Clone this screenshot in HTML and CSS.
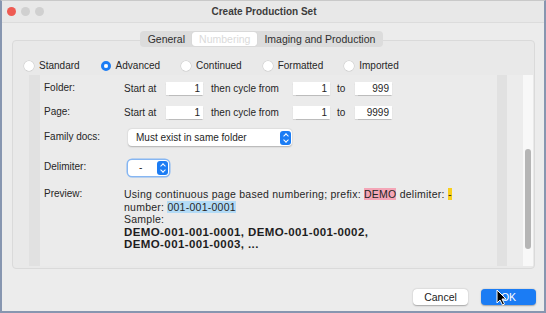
FILE: index.html
```html
<!DOCTYPE html>
<html lang="en">
<head>
    <meta charset="UTF-8">
    <meta name="viewport" content="width=device-width, initial-scale=1.0">
    <title>Create Production Set</title>
    <link rel="stylesheet" href="styles.css">
</head>
<body>
    <div class="window">
        <div class="titlebar">
            <div class="lights">
                <span class="light red"></span>
                <span class="light"></span>
                <span class="light"></span>
            </div>
            <div class="title">Create Production Set</div>
        </div>

        <div class="tabs-row">
            <div class="tabs">
                <span class="tab">General</span>
                <span class="tab selected">Numbering</span>
                <span class="tab">Imaging and Production</span>
            </div>
        </div>

        <div class="box">
            <div class="radios">
                <label class="radio"><span class="dot"></span>Standard</label>
                <label class="radio checked"><span class="dot"></span>Advanced</label>
                <label class="radio"><span class="dot"></span>Continued</label>
                <label class="radio"><span class="dot"></span>Formatted</label>
                <label class="radio"><span class="dot"></span>Imported</label>
            </div>

            <div class="scroll">
                <div class="strip"></div>
                <div class="form">
                    <div class="row">
                        <span class="label">Folder:</span>
                        <span class="word start">Start at</span>
                        <span class="field">1</span>
                        <span class="word cycle">then cycle from</span>
                        <span class="field">1</span>
                        <span class="word to">to</span>
                        <span class="field">999</span>
                    </div>
                    <div class="row">
                        <span class="label">Page:</span>
                        <span class="word start">Start at</span>
                        <span class="field">1</span>
                        <span class="word cycle">then cycle from</span>
                        <span class="field">1</span>
                        <span class="word to">to</span>
                        <span class="field">9999</span>
                    </div>
                    <div class="row popup-row">
                        <span class="label">Family docs:</span>
                        <div class="popup wide">
                            <span class="popup-text">Must exist in same folder</span>
                            <span class="stepper"></span>
                        </div>
                    </div>
                    <div class="row popup-row delim-row">
                        <span class="label">Delimiter:</span>
                        <div class="popup narrow focused">
                            <span class="popup-text">-</span>
                            <span class="stepper"></span>
                        </div>
                    </div>
                    <div class="row preview-row">
                        <span class="label">Preview:</span>
                        <div class="preview">
                            Using continuous page based numbering; prefix: <span class="hl-prefix">DEMO</span> delimiter: <span class="hl-delim">-</span><br>
                            number: <span class="hl-number">001-001-0001</span><br>
                            Sample:<br>
                            <span class="sample">DEMO-001-001-0001, DEMO-001-001-0002,<br>DEMO-001-001-0003, ...</span>
                        </div>
                    </div>
                </div>
                <div class="strip right"></div>
                <div class="gutter"></div>
                <div class="track"><div class="thumb"></div></div>
            </div>
        </div>

        <div class="buttons">
            <button class="btn">Cancel</button>
            <button class="btn primary">OK</button>
        </div>

        <svg class="cursor" width="11" height="17" viewBox="0 0 11 17">
            <path d="M1 1 L1 14 L4 11 L6.5 16 L8.5 15 L6 10 L10 10 Z" fill="#000" stroke="#fff" stroke-width="1"/>
        </svg>
    </div>
</body>
</html>
```

FILE: styles.css
```css
body {
    margin: 0;
    background-color: #ececec;
    font-family: "Liberation Sans", Arial, sans-serif;
    font-size: 10px;
    color: #262626;
}
.window {
    position: relative;
    width: 546px;
    height: 313px;
    box-sizing: border-box;
    border: 2px solid #8796b0;
    border-top: 1px solid #c9c9c9;
    background-color: #ececec;
    display: flex;
    flex-direction: column;
    overflow: hidden;
}
.titlebar {
    height: 21px;
    display: flex;
    align-items: center;
    background-color: #e8e8e8;
    border-bottom: 1px solid #dcdcdc;
    position: relative;
}
.lights {
    display: flex;
    gap: 5px;
    padding-left: 5px;
    width: 120px;
}
.light {
    width: 9px;
    height: 9px;
    border-radius: 50%;
    background-color: #d0d0d0;
}
.light.red { background-color: #ee5b53; }
.title {
    flex: 1;
    text-align: center;
    font-weight: bold;
    font-size: 10px;
    color: #3c3c3c;
    padding-right: 143px;
}
.tabs-row {
    display: flex;
    justify-content: center;
    padding-right: 23px;
    margin-top: 8px;
    margin-bottom: -7px;
    position: relative;
    z-index: 1;
}
.tabs {
    display: flex;
    background-color: #dcdcdc;
    border-radius: 4px;
    padding: 1px;
    height: 14px;
}
.tab {
    padding: 0 7px;
    line-height: 14px;
    font-size: 10.5px;
    color: #2e2e2e;
}
.tab.selected {
    background-color: #fff;
    color: #dadada;
    border-radius: 3px;
    box-shadow: 0 0 1px rgba(0,0,0,0.15);
}
.box {
    margin: 0 9px 0 10px;
    height: 229px;
    box-sizing: border-box;
    border: 1px solid #dadada;
    border-radius: 4px;
    background-color: #e9e9e9;
    display: flex;
    flex-direction: column;
}
.radios {
    display: flex;
    gap: 21px;
    padding: 19px 0 0 11px;
    height: 12px;
}
.radio {
    display: flex;
    align-items: center;
    gap: 5px;
    line-height: 12px;
}
.dot {
    width: 10px;
    height: 10px;
    box-sizing: border-box;
    border-radius: 50%;
    background-color: #fff;
    box-shadow: 0 0 0 0.5px #c8c8c8;
}
.radio.checked .dot {
    background-color: #1b7cf4;
    box-shadow: none;
    border: 3px solid #1b7cf4;
    background-clip: padding-box;
}
.radio.checked .dot::after {
    content: "";
    display: block;
    width: 4px;
    height: 4px;
    border-radius: 50%;
    background-color: #fff;
}
.scroll {
    flex: 1;
    display: flex;
    margin: 3px 1px 2px 16px;
    background-color: #ebebeb;
}
.strip {
    width: 11px;
    background-color: #e1e1e1;
}
.strip.right { width: 10px; }
.gutter {
    width: 16px;
    background-color: #ececec;
}
.track {
    width: 10px;
    background-color: #f8f8f8;
    padding-top: 74px;
    box-sizing: border-box;
    display: flex;
    justify-content: center;
}
.thumb {
    width: 6px;
    height: 100px;
    border-radius: 3px;
    background-color: #b5b5b5;
}
.form {
    flex: 1;
    padding: 6px 0 0 4px;
    display: flex;
    flex-direction: column;
    gap: 10px;
}
.row {
    display: flex;
    align-items: center;
    height: 14px;
}
.popup-row { height: 17px; }
.delim-row { margin-top: 3px; }
.preview-row {
    align-items: flex-start;
    height: auto;
    margin-top: 2px;
}
.label {
    width: 80px;
    flex-shrink: 0;
    line-height: 12.5px;
}
.word.start { width: 42px; }
.word.cycle { width: 82px; margin-left: 8px; }
.word.to { width: 18px; margin-left: 7px; }
.field {
    width: 37px;
    height: 13px;
    box-sizing: border-box;
    background-color: #fff;
    text-align: right;
    padding-right: 3px;
    line-height: 13px;
    box-shadow: 0 0.5px 1px rgba(0,0,0,0.2);
}
.popup {
    margin-left: 4px;
    height: 17px;
    box-sizing: border-box;
    background-color: #fff;
    border-radius: 4px;
    box-shadow: 0 0.5px 1.5px rgba(0,0,0,0.25);
    display: flex;
    align-items: center;
    justify-content: space-between;
    padding: 0 1px 0 8px;
}
.popup.wide { width: 164px; }
.popup.narrow { width: 41px; height: 16px; padding-left: 11px; }
.popup.focused { box-shadow: 0 0 0 1.5px #86b6f2; }
.stepper {
    width: 11px;
    height: 14px;
    border-radius: 3px;
    background-color: #1b7cf4;
    position: relative;
}
.stepper::before,
.stepper::after {
    content: "";
    position: absolute;
    left: 3.5px;
    width: 3px;
    height: 3px;
    border-left: 1px solid #fff;
    border-top: 1px solid #fff;
}
.stepper::before { top: 3px; transform: rotate(45deg); }
.stepper::after { bottom: 3px; transform: rotate(225deg); }
.preview {
    line-height: 12.5px;
    font-size: 10.5px;
    letter-spacing: 0.25px;
}
.sample {
    font-weight: bold;
    font-size: 11.5px;
    letter-spacing: 0.4px;
    color: #1e1e1e;
}
.hl-prefix { background-color: #f4a6b7; }
.hl-delim { background-color: #f8cf1c; }
.hl-number { background-color: #b3dbf6; }
.buttons {
    display: flex;
    justify-content: flex-end;
    gap: 13px;
    margin: 20px 8px 0 0;
}
.btn {
    width: 55px;
    height: 16px;
    border: none;
    border-radius: 4px;
    background-color: #fff;
    font-family: "Liberation Sans", Arial, sans-serif;
    font-size: 10.5px;
    color: #222;
    padding: 0;
    box-shadow: 0 0.5px 1.5px rgba(0,0,0,0.3);
}
.btn.primary {
    background-color: #1b7cf4;
    color: #fff;
}
.cursor {
    position: absolute;
    left: 494px;
    top: 288px;
}
```
